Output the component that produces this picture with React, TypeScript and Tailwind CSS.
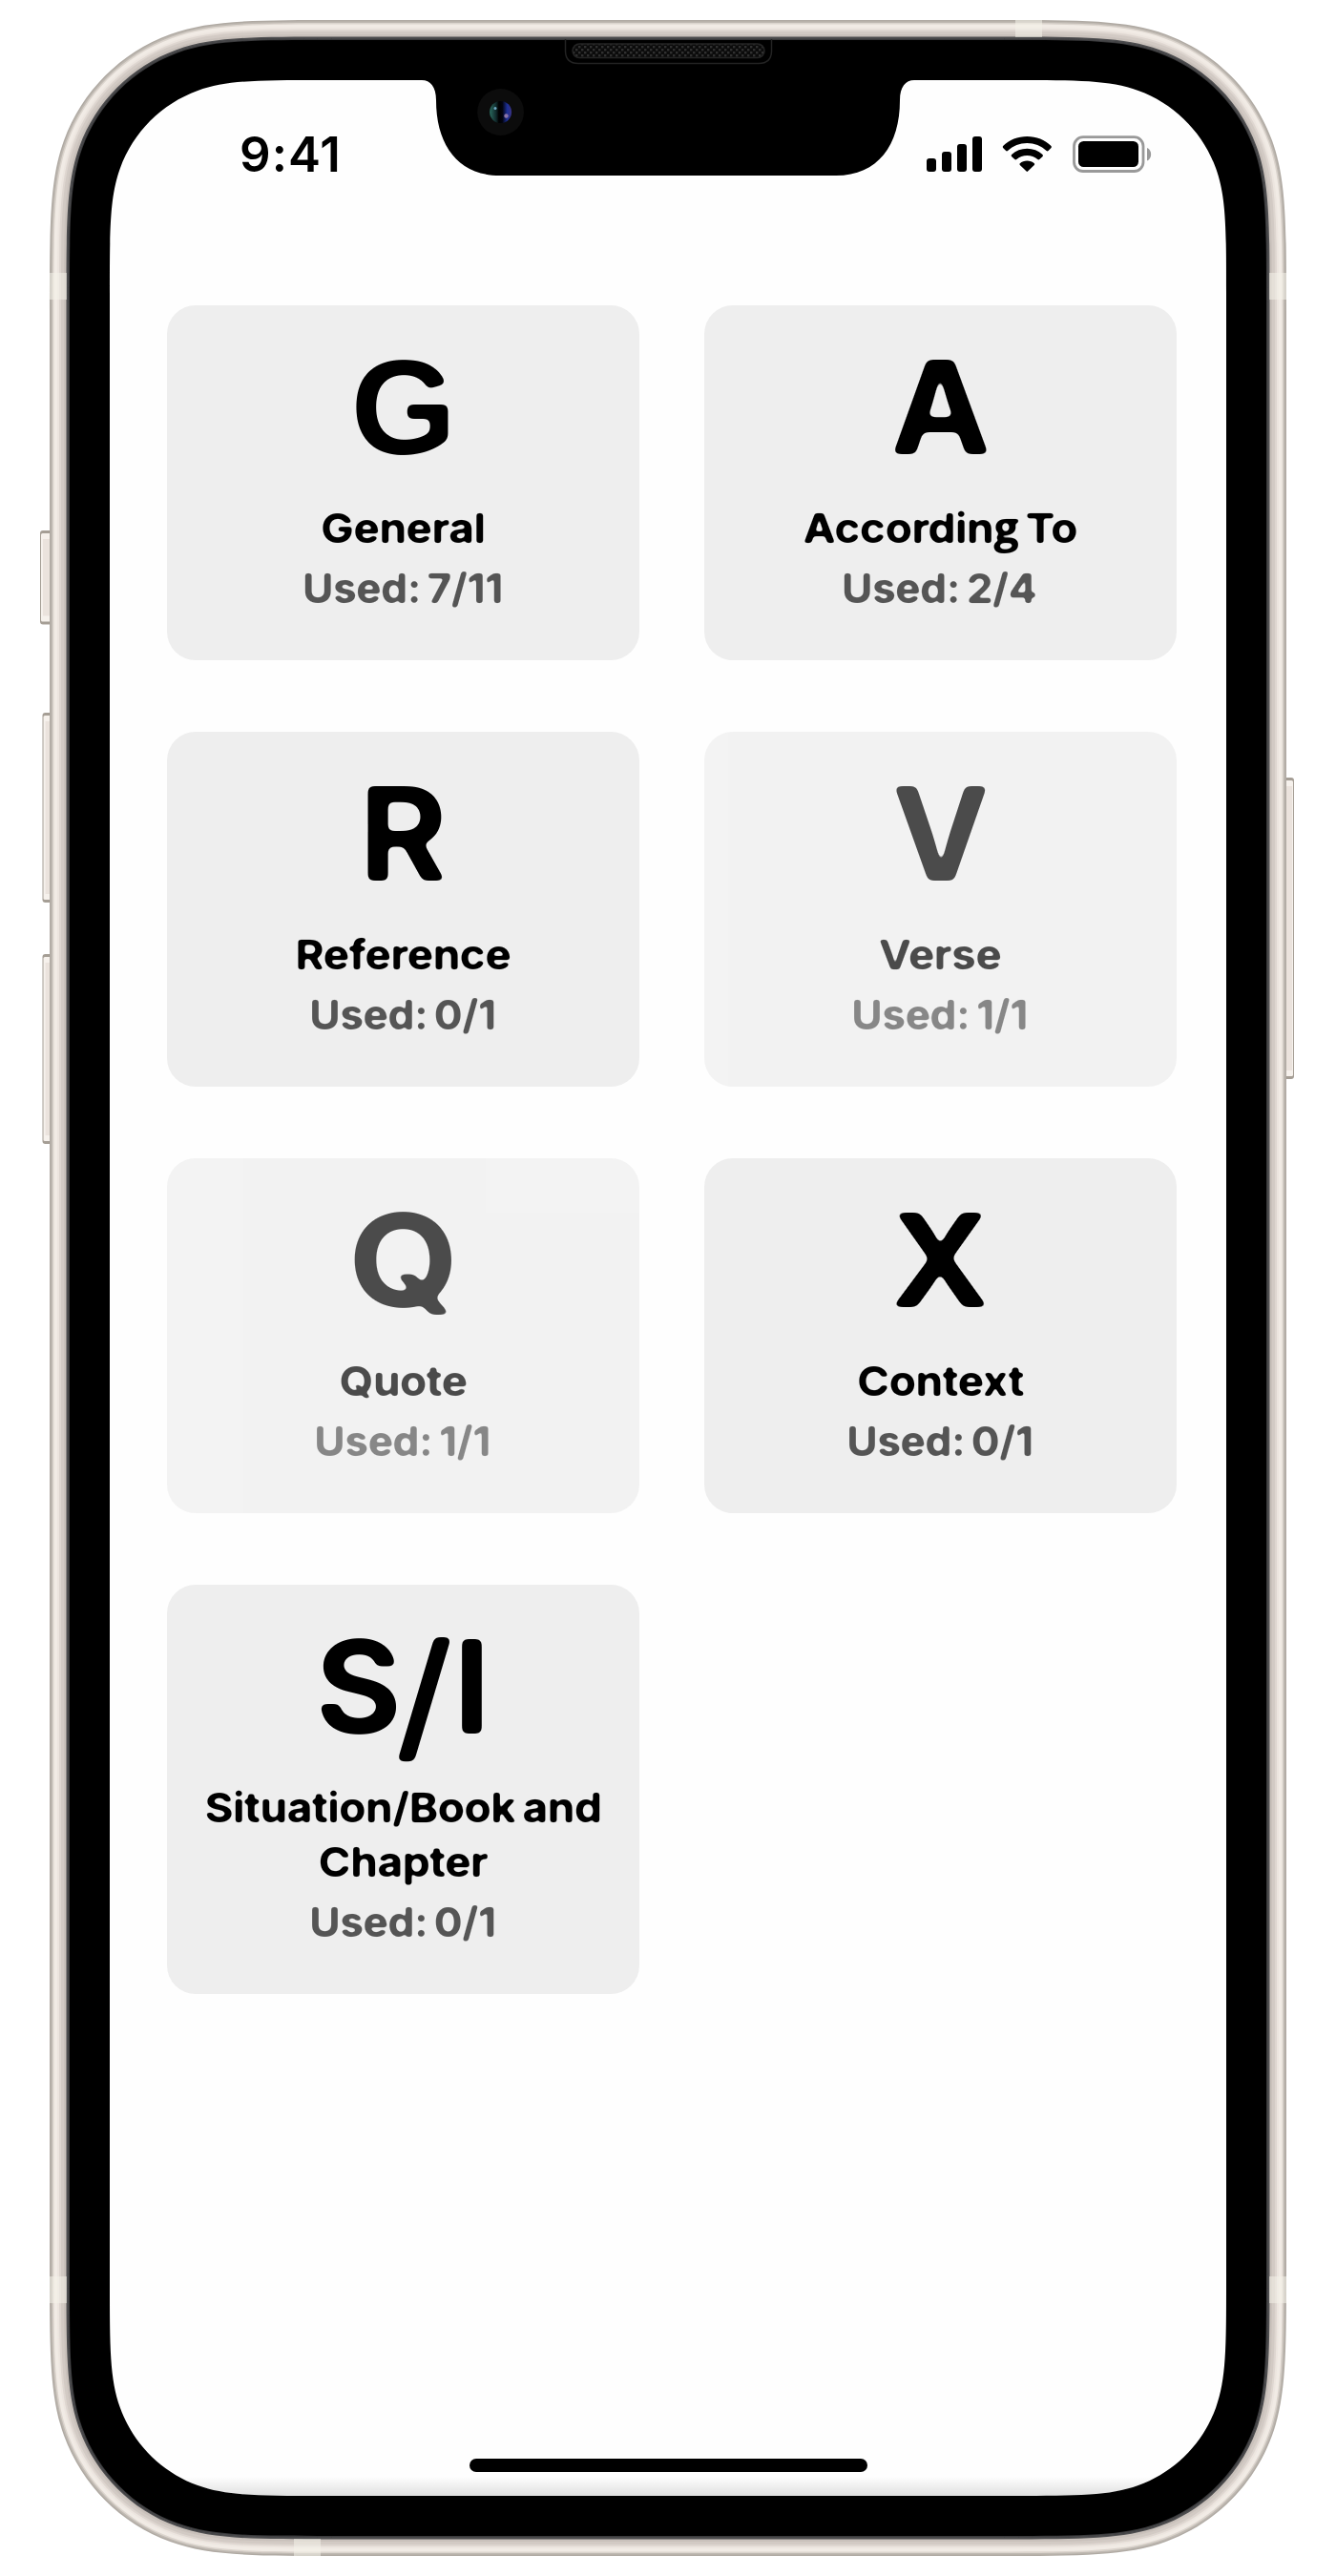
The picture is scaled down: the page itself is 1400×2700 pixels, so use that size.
import type { ReactNode } from "react";

type Category = {
  id: string;
  letter: ReactNode;
  letterClass: string;
  name: ReactNode;
  used: string;
  disabled?: boolean;
};

const categories: Category[] = [
  {
    id: "general",
    letter: <span className="font-['Liberation_Sans',sans-serif] text-[141px]">G</span>,
    letterClass: "scale-x-[1.01]",
    name: "General",
    used: "7/11",
  },
  {
    id: "according",
    letter: "A",
    letterClass: "scale-x-[1.05]",
    name: (
      <>
        Accordin<span className="font-['Open_Sans',sans-serif] text-[44px] leading-none">g</span> To
      </>
    ),
    used: "2/4",
  },
  { id: "reference", letter: "R", letterClass: "scale-x-[1.04]", name: "Reference", used: "0/1" },
  { id: "verse", letter: "V", letterClass: "scale-x-[1.02]", name: "Verse", used: "1/1", disabled: true },
  { id: "quote", letter: "Q", letterClass: "scale-x-[1.1]", name: "Quote", used: "1/1", disabled: true },
  { id: "context", letter: "X", letterClass: "scale-x-[1.06]", name: "Context", used: "0/1" },
  {
    id: "situation",
    letter: (
      <>
        S<span className="inline-block -translate-x-[3px] translate-y-[8px] scale-y-[1.1] -skew-x-3">/</span>I
      </>
    ),
    letterClass: "scale-x-[1.02]",
    name: "Situation/Book and Chapter",
    used: "0/1",
  },
];

// Outline of a rectangle with continuous-curvature corners.
function squircle(x0: number, y0: number, x1: number, y1: number, r: number) {
  const a = 1.528665 * r;
  const b = 1.07 * r;
  const c = 0.837 * r;
  const d = 0.631494 * r;
  const e = 0.074911 * r;
  const f = 0.372824 * r;
  const g = 0.16906 * r;
  return [
    `M${x0 + a} ${y0}H${x1 - a}`,
    `C${x1 - b} ${y0} ${x1 - c} ${y0} ${x1 - d} ${y0 + e}`,
    `C${x1 - f} ${y0 + g} ${x1 - g} ${y0 + f} ${x1 - e} ${y0 + d}`,
    `C${x1} ${y0 + c} ${x1} ${y0 + b} ${x1} ${y0 + a}V${y1 - a}`,
    `C${x1} ${y1 - b} ${x1} ${y1 - c} ${x1 - e} ${y1 - d}`,
    `C${x1 - g} ${y1 - f} ${x1 - f} ${y1 - g} ${x1 - d} ${y1 - e}`,
    `C${x1 - c} ${y1} ${x1 - b} ${y1} ${x1 - a} ${y1}H${x0 + a}`,
    `C${x0 + b} ${y1} ${x0 + c} ${y1} ${x0 + d} ${y1 - e}`,
    `C${x0 + f} ${y1 - g} ${x0 + g} ${y1 - f} ${x0 + e} ${y1 - d}`,
    `C${x0} ${y1 - c} ${x0} ${y1 - b} ${x0} ${y1 - a}V${y0 + a}`,
    `C${x0} ${y0 + b} ${x0} ${y0 + c} ${x0 + e} ${y0 + d}`,
    `C${x0 + g} ${y0 + f} ${x0 + f} ${y0 + g} ${x0 + d} ${y0 + e}`,
    `C${x0 + c} ${y0} ${x0 + b} ${y0} ${x0 + a} ${y0}Z`,
  ].join("");
}

const inset = (n: number) => squircle(52 + n, 21 + n, 1348 - n, 2679 - n, 200 - n);

// Metal rim shades, from the outer edge inwards.
const rim: [number, string][] = [
  [0, "#b0aaa3"],
  [1.5, "#bfb9b2"],
  [3, "#dbd4cd"],
  [4.5, "#f1ebe5"],
  [8, "#ece5df"],
  [10, "#ded6d0"],
  [12, "#d2cac4"],
  [15, "#c9c1bb"],
  [17.5, "#4d4d4f"],
  [19, "#39393b"],
  [21, "#000000"],
];

function SideButton({ x, y, w, h }: { x: number; y: number; w: number; h: number }) {
  return (
    <g>
      <rect x={x} y={y} width={w} height={h} rx="3" fill="#a59e95" />
      <rect x={x + 1} y={y + 3} width={w - 2} height={h - 6} rx="1.5" fill="#f6f1ec" />
      <rect x={x + 3} y={y + 9} width={w - 5} height={h - 18} fill="#ebe3dd" />
    </g>
  );
}

function Device() {
  return (
    <svg className="absolute inset-0" width="1400" height="2700" viewBox="0 0 1400 2700" aria-hidden="true">
      <defs>
        <linearGradient id="screenFoot" x1="0" y1="0" x2="0" y2="1">
          <stop offset="0" stopColor="#000" stopOpacity="0" />
          <stop offset="1" stopColor="#000" stopOpacity="0.12" />
        </linearGradient>
        <linearGradient id="lens" x1="0" y1="0" x2="1" y2="0">
          <stop offset="0" stopColor="#2a6a5e" />
          <stop offset="0.3" stopColor="#10282a" />
          <stop offset="0.42" stopColor="#000" />
          <stop offset="0.58" stopColor="#02030f" />
          <stop offset="0.8" stopColor="#1c2f96" />
          <stop offset="1" stopColor="#3a3280" />
        </linearGradient>
        <pattern id="mesh" width="6" height="6" patternUnits="userSpaceOnUse">
          <rect width="6" height="6" fill="#0b0b0b" />
          <rect width="2.4" height="2.4" fill="#303030" />
          <rect x="3" y="3" width="2.4" height="2.4" fill="#303030" />
        </pattern>
        <clipPath id="screenClip">
          <path d={squircle(115, 84, 1285, 2616, 146)} />
        </clipPath>
        <filter id="softBig" x="-10%" y="-10%" width="120%" height="120%" colorInterpolationFilters="sRGB">
          <feGaussianBlur stdDeviation="3.3" />
          <feColorMatrix values="1 0 0 0 0 0 1 0 0 0 0 0 1 0 0 0 0 0 8.500 -3.750" />
        </filter>
        <filter id="softSmall" x="-10%" y="-10%" width="120%" height="120%" colorInterpolationFilters="sRGB">
          <feGaussianBlur stdDeviation="1.4" />
          <feColorMatrix values="1 0 0 0 0 0 1 0 0 0 0 0 1 0 0 0 0 0 3.6 -1.25" />
        </filter>
      </defs>
      <SideButton x={42} y={556} w={13} h={98.5} />
      <SideButton x={44.5} y={747} w={11} h={199} />
      <SideButton x={44.5} y={1000} w={11} h={199} />
      <SideButton x={1345} y={815} w={11} h={316} />
      {rim.map(([n, color]) => (
        <path key={n} d={inset(n)} fill={color} />
      ))}
      <path d={inset(19.6)} fill="none" stroke="#4a4a4c" strokeWidth="1" />
      <g fill="#f4f2ea" fillOpacity="0.55">
        <rect x="52" y="286" width="18" height="28" />
        <rect x="1330" y="286" width="18" height="28" />
        <rect x="52" y="2386" width="18" height="28" />
        <rect x="1330" y="2386" width="18" height="28" />
        <rect x="1064" y="21" width="28" height="18" />
        <rect x="308" y="2661" width="28" height="18" />
      </g>
      <path d={squircle(115, 84, 1285, 2616, 146)} fill="#fefefe" />
      <rect x="115" y="2596" width="1170" height="20" fill="url(#screenFoot)" clipPath="url(#screenClip)" />
      <path
        d="M442 83V84C451 84 457 91 457 105C457 152 480 184 524 184H876C920 184 943 152 943 105C943 91 949 84 958 84V83Z"
        fill="#000"
      />
      <path d="M592.500 41V54Q593 66.500 606 66.500H795Q808 66.500 808.500 54V41" fill="none" stroke="#232323" strokeWidth="1.5" />
      <rect x="600" y="46" width="201" height="14.500" rx="7.250" fill="url(#mesh)" stroke="#242424" strokeWidth="1.500" />
      <circle cx="524.600" cy="117.500" r="24.400" fill="#0c0c0c" />
      <circle cx="524.600" cy="117.500" r="11.500" fill="url(#lens)" />
      <circle cx="519" cy="113.500" r="1.500" fill="#6fa9c4" />
      <circle cx="530.500" cy="121.500" r="2.200" fill="#8a74a8" />
    </svg>
  );
}

function StatusIcons() {
  return (
    <svg width="236" height="40" viewBox="0 0 236 40" aria-hidden="true">
      <rect x="0" y="24" width="10" height="14" rx="3" />
      <rect x="16" y="17" width="10" height="21" rx="3" />
      <rect x="32" y="9" width="10" height="29" rx="3" />
      <rect x="48" y="1" width="10" height="37" rx="3" />
      <path d="M105.300 1C115 1 124 4.600 130.500 11Q131.300 12 130.500 13L127.500 16Q126.600 16.800 125.600 16C120 10.800 113 8 105.300 8S90.600 10.800 85 16Q84 16.800 83.100 16L80.100 13Q79.300 12 80.100 11C86.600 4.600 95.600 1 105.300 1Z" />
      <path d="M105.300 13.800C111.500 13.800 117 16 121.500 20Q122.400 21 121.600 22L118.300 25Q117.300 25.800 116.300 25C113.200 22.500 109.500 21 105.300 21S97.400 22.500 94.300 25Q93.300 25.800 92.300 25L89 22Q88.200 21 89.100 20C93.600 16 99.100 13.800 105.300 13.800Z" />
      <path d="M105.300 26.500C108.300 26.500 110.800 27.500 112.800 29.200Q113.600 30 112.800 31L106 37.600Q105.300 38.200 104.600 37.600L97.800 31Q97 30 97.800 29.200C99.800 27.500 102.300 26.500 105.300 26.500Z" />
      <rect x="154.500" y="1.700" width="72.500" height="35.800" rx="9.500" fill="none" stroke="#999" strokeWidth="2.800" />
      <rect x="159" y="6" width="63" height="27" rx="5.500" />
      <path d="M231 13C236.500 15 236.500 24.500 231 26.500Z" fill="#999" />
    </svg>
  );
}

function Card({ item }: { item: Category }) {
  return (
    <button
      className={`flex flex-col items-center self-start rounded-[30px] bg-[#eeeeee] px-5 pt-[49px] pb-[47px] text-center font-['Inter',sans-serif] font-bold text-black ${
        item.disabled ? "opacity-70" : ""
      }`}
    >
      <span className={`mb-[41px] h-[115px] text-[136px] leading-[115px] [filter:url(#softBig)] ${item.letterClass}`}>
        {item.letter}
      </span>
      <span className="scale-x-[1.07] text-[43px] leading-[57px] tracking-[-0.01em] [word-spacing:-0.07em] [filter:url(#softSmall)]">
        {item.name}
      </span>
      <span className="mt-[6px] -translate-x-px scale-x-[1.03] text-[43px] leading-[57px] tracking-[-0.01em] whitespace-nowrap text-[#555555] [word-spacing:-0.08em] [filter:url(#softSmall)]">
        Used: {item.used}
      </span>
    </button>
  );
}

export default function App() {
  return (
    <div className="relative h-[2700px] w-[1400px] overflow-hidden bg-white">
      <Device />
      <div className="relative flex h-full flex-col items-center pt-[84px]">
        <header className="flex h-[236px] w-[1170px] items-start justify-between pt-[58px] pr-[78px] pl-[136px]">
          <time className="font-['Inter',sans-serif] text-[51px] leading-[40px] font-semibold tracking-[0.02em]">
            9:41
          </time>
          <StatusIcons />
        </header>
        <main className="ml-[8px] grid w-[1058px] grid-cols-2 gap-x-[68px] gap-y-[75px]">
          {categories.map((item) => (
            <Card key={item.id} item={item} />
          ))}
        </main>
        <div className="mt-auto mb-[109px] h-[14px] w-[417px] rounded-full bg-black" />
      </div>
    </div>
  );
}
